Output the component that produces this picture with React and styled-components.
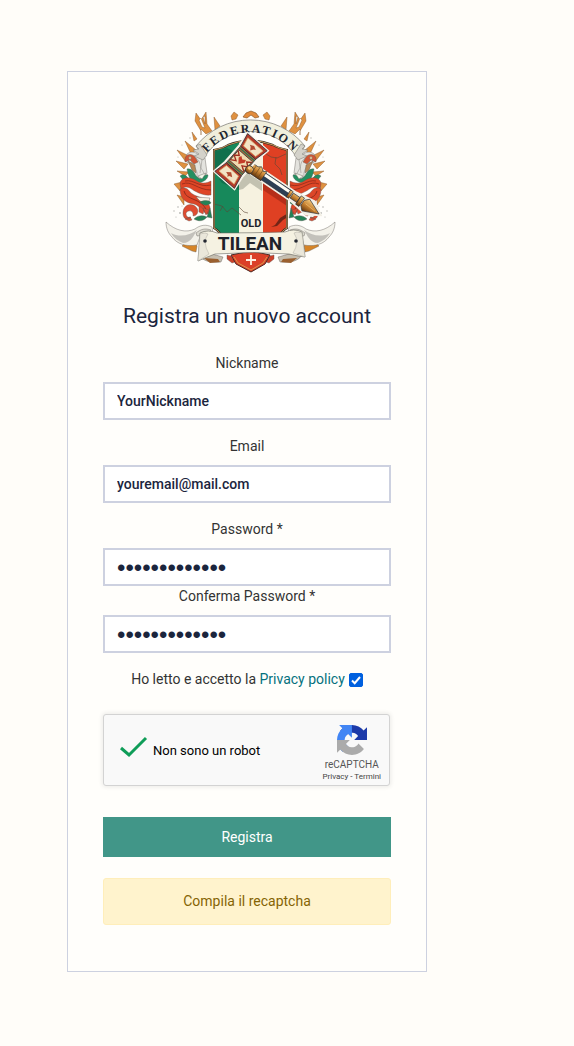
import React, { useState } from "react";
import styled, { createGlobalStyle } from "styled-components";

const GlobalStyle = createGlobalStyle`
  *, *::before, *::after { box-sizing: border-box; }
  body {
    margin: 0;
    background: #fffdf9;
    color: #333;
    font: 14px/21px Roboto, "Liberation Sans", sans-serif;
  }
`;

const Page = styled.main`
  padding: 71px 67px 74px;
`;

const Card = styled.section`
  width: 100%;
  max-width: 360px;
  padding: 26px 35px 46px;
  background: #fffefb;
  border: 1px solid #cdd1e0;
  text-align: center;
`;

const Logo = styled.svg`
  display: block;
  width: 180px;
  height: 180px;
  margin: 0 auto;
`;

const Title = styled.h1`
  margin: 25px 0 23px;
  color: #1b253d;
  font-size: 21px;
  font-weight: 400;
  line-height: 27px;
`;

const Form = styled.form`
  display: flex;
  flex-direction: column;
`;

const Field = styled.div`
  display: flex;
  flex-direction: column;
  gap: 8px;
  margin-bottom: ${(p) => (p.$tight ? "0" : "16px")};
`;

const Input = styled.input`
  width: 100%;
  height: 38px;
  padding: 0 12px;
  border: 2px solid #cdd1e0;
  border-radius: 0;
  outline: none;
  background: #fff;
  color: #1b253d;
  font: 500 14px/20px Roboto, "Liberation Sans", sans-serif;
  &[type="password"] {
    padding-top: 2px;
    font: 400 24px/32px "Liberation Sans", sans-serif;
  }
`;

const Consent = styled.div`
  display: flex;
  align-items: center;
  justify-content: center;
  gap: 4px;
  margin-bottom: 24px;
`;

const PolicyLink = styled.a`
  color: #05717e;
  text-decoration: none;
`;

const Checkbox = styled.input`
  appearance: none;
  width: 14px;
  height: 14px;
  margin: 0;
  border: 1px solid #767676;
  border-radius: 2px;
  background: #fff;
  &:checked {
    border-color: #0060df;
    background: #0060df;
  }
`;

const CheckWrap = styled.span`
  display: grid;
  > * { grid-area: 1 / 1; }
  svg { pointer-events: none; }
`;

const Captcha = styled.div`
  display: flex;
  align-items: center;
  height: 72px;
  margin: 0 1px 31px 0;
  padding: 0 8px 0 16px;
  background: #f9f9f9;
  border: 1px solid #d3d3d3;
  border-radius: 3px;
  box-shadow: 0 0 4px 1px rgba(0, 0, 0, 0.08);
  color: #000;
`;

const CaptchaText = styled.span`
  flex: 1;
  margin-left: 5px;
  font-size: 13px;
  text-align: left;
`;

const CaptchaBrand = styled.div`
  display: flex;
  flex-direction: column;
  align-items: center;
  padding-top: 8px;
  color: #555;
  font-size: 10px;
  line-height: 12px;
  svg { margin-bottom: 4px; }
`;

const CaptchaLinks = styled.div`
  font-size: 8px;
  line-height: 12px;
  color: #222;
  a { color: #444; text-decoration: none; }
`;

const Submit = styled.button`
  height: 40px;
  margin-bottom: 21px;
  padding: 0;
  border: 0;
  background: #419688;
  color: #fff;
  font: 14px/21px Roboto, "Liberation Sans", sans-serif;
`;

const Alert = styled.div`
  padding: 12px;
  border: 1px solid #ffeeba;
  border-radius: 3px;
  background: #fff3cd;
  color: #856404;
`;

const INK = "#242832";

function SideOrnament() {
  return (
    <g stroke="#5b5552" strokeWidth="0.4" strokeLinejoin="round">
      <g fill="#df9140" stroke="#7b4a1c">
        <path d="M185 141l11 9-5 4zM177 150l14 7-5 5zM176 161l12 3-4 5zM177 171l12 1-4 4zM174 184l8-2-2 9zM177 195l7 2v8zM214 117l6 9-5 4zM192 132l5 7-3 2z" />
        <path d="M201 131l-6-10 1-8 5 7 5-8 1 12 5 7-6 3-5-5v6z" />
        <path d="M199 120l2-2 4 10-3-1zM203 117l2-1v8z" fill="#fffdf6" />
        <path d="M231 116l3-4 4 3-2 4-4 1z" />
      </g>
      <path d="M187 154c5-4 10-1 13 2l5 2 2 15-5 7-7-4-5-12-5-3z" fill="#e4e3de" />
      <path d="M185 158c2-5 8-4 10-1l3 5-4 2-4-4-5 2z" fill="#cf5535" />
      <circle cx="190" cy="158" r="1.4" fill="#f1d4a5" />
      <path d="M191 162c3 5 7 8 6 15M196 158c5 4 5 9 4 15M202 159l-1 9 4 7" fill="none" stroke="#74716d" />
      <path d="M188 161l4 9 4 3-1-8z" fill="#b88755" />
      <path d="M187 169c4-1 7 3 9 7l4 3c4-4 7-5 8-4 0 4-4 7-10 8-7 0-10-7-11-14zM180 176c4-3 8 0 10 6l-6-1z" fill="#239061" />
      <path d="M198 176l8-3-4 6z" fill="#f3f7e9" />
      <path d="M180 184c0-6 8-9 17-3 6 4 12 1 14 0v14c-8 1-15-3-21-7-5-2-8-1-8 5z" fill="#df4626" />
      <path d="M182 184c10-4 15 6 29 6M185 181c9-2 14 7 26 4" fill="none" stroke="#842718" strokeWidth="0.7" />
      <path d="M180 189c5-3 8 0 11 4 6 5 15 3 19 14v8c-7-1-9-9-16-11-8-1-14-5-14-15z" fill="#dc4628" />
      <path d="M184 191c2 10 17 6 23 20" fill="none" stroke="#7d2719" strokeWidth="0.8" />
      <path d="M196 197l14 1-2 6-8-3z" fill="#f7f2e4" />
      <path d="M200 202c4-2 10-2 11 1-4 3-7 3-11-1zM194 219c4-4 9-4 13-2-3 4-8 5-13 2zM207 217l3-9 2 10z" fill="#238357" />
      <path d="M183 213c0-8 8-11 13-6 4 4 1 9-3 9 1-5-4-7-7-3 0 4 2 5 5 4-4 4-8 2-8-4zM199 207c4-1 6 4 4 7l-4-2zM185 219l5-2 2 3-3 1zM203 208l6 2-3 5z" fill="#df4c31" />
      <g fill="#b4b4b0" stroke="none">
        <circle cx="178" cy="207" r="0.8" /><circle cx="174" cy="211" r="0.7" /><circle cx="180" cy="213" r="0.9" />
        <circle cx="176" cy="217" r="0.6" /><circle cx="182" cy="206" r="0.5" /><circle cx="190" cy="138" r="0.7" />
        <circle cx="182" cy="145" r="0.6" /><circle cx="178" cy="157" r="0.6" />
      </g>
      <path d="M182 246l3-3h10l2 3-1 6-4-1-4-2z" fill="#d68427" />
      <path d="M166 222c10 9 20 11 29 7 5-4 11-5 17-2l1 7-13 3-3 8c-11 2-20-1-25-8-4-4-6-9-6-15z" fill="#f3f1e9" />
      <path d="M171 233c9 5 19 2 26-3l-4 7c-3 4-6 6-10 6-5-2-9-5-12-10z" fill="#c3c1bb" stroke="none" />
      <path d="M196 233c5-4 9-5 15-3l-4 5-10 1z" fill="#dad8ce" />
      <path d="M199 255l13-1 11 3-2 5c-8 1-18 0-22-7z" fill="#c6bfb0" />
      <path d="M204 258l14 1 2 3-10 1z" fill="#9b602f" stroke="none" />
      <path d="M227 255l4 1 4 6-3 1-5-4z" fill="#cc402a" />
    </g>
  );
}

function FederationLogo() {
  return (
    <Logo viewBox="157 98 180 180" role="img" aria-label="Federation Old Tilean">
      <defs>
        <clipPath id="shield">
          <path d="M214 150q10-2 14-5 22-9 45 0 5 3 14 5v78q-6 3-8 11h-57q-2-8-8-11z" />
        </clipPath>
        <path id="motto" d="M194 182A57 57 0 0 1 307 182" />
        <linearGradient id="gold" x1="0" y1="0" x2="0" y2="1">
          <stop offset="0" stopColor="#f5cc7f" />
          <stop offset="0.5" stopColor="#c78130" />
          <stop offset="1" stopColor="#60340d" />
        </linearGradient>
      </defs>

      <SideOrnament />
      <g transform="translate(501 0) scale(-1 1)">
        <SideOrnament />
      </g>
      <path d="M243 117l3-4 5-2 5 2 3 4-4 1-4-3-4 3z" fill="#e28c3c" stroke="#7b4a1c" strokeWidth="0.6" />

      <g clipPath="url(#shield)">
        <path d="M213 138h26v105h-26z" fill="#17895b" />
        <path d="M239 138h24v105h-24z" fill="#f6f2e0" />
        <path d="M263 138h27v105h-27z" fill="#df4023" />
        <path d="M213 152l14-4 12 6v6l-26 14zM222 183l17 7v-15l-20 4z" fill="#0c5b42" opacity="0.55" />
        <path d="M239 176l9-7 14 12v10l-12-8-7 6-4 1z" fill="#777a6c" opacity="0.4" />
        <path d="M263 182l24 17v7l-24-16z" fill="#9b2312" opacity="0.6" />
        <path d="M214 204l8 2 5 6 5-4 9 7M223 206l-3 5M239 207l5 5 4 1M263 152l8 5 6 1 11-5M276 157l-1 7 5 5 2 6" fill="none" stroke="#5d4635" strokeWidth="0.6" />
        <path d="M288 213l-8 5-5 7-4 2 6-1 6-6 5-3z" fill="#742416" />
      </g>
      <path d="M214 150q10-2 14-5 22-9 45 0 5 3 14 5v78q-6 3-8 11h-57q-2-8-8-11z" fill="none" stroke="#2f2a25" strokeWidth="2" />
      <path d="M214 150q10-2 14-5 22-9 45 0 5 3 14 5v78q-6 3-8 11h-57q-2-8-8-11z" fill="none" stroke="#dca964" strokeWidth="0.9" />

      <path d="M196 146A70 70 0 0 1 305 146L297 158A54 54 0 0 0 204 158z" fill="#f1efdc" stroke="#777670" strokeWidth="0.7" />
      <path d="M196 146l4-2 7 11-4 5-9-4 5-2-6-4 6-1zM305 146l-4-2-7 11 4 5 9-4-5-2 6-4-6-1z" fill="#d4d2ca" stroke="#77746f" strokeWidth="0.5" />
      <text fill="#20252f" fontFamily="'Liberation Serif', serif" fontSize="12" fontWeight="700" letterSpacing="2">
        <textPath href="#motto" startOffset="50%" textAnchor="middle">FEDERATION</textPath>
      </text>

      <g transform="translate(242 162) rotate(34)" stroke={INK} strokeWidth="0.6">
        <path d="M10-5h52l20-3 13 8-13 8-20-3H10z" fill="#f3f0e6" stroke="#f3f0e6" strokeWidth="2" />
        <path d="M24-4h33v8H24z" fill="#2d3f54" />
        <path d="M25-2h31" stroke="#fffdf4" strokeWidth="3" />
        <path d="M10-5h6l3-2 4 3 3-2v11H10z" fill="url(#gold)" />
        <path d="M14-5V5M18-6V5M22-5V5" stroke="#67421d" />
        <path d="M56-4h3V4h-3zM60-3h8v6h-8zM68-5h4V5h-4z" fill="url(#gold)" />
        <path d="M73-3l4-4 16 7-16 7-4-4z" fill="url(#gold)" />
        <path d="M76-1l12 1" stroke="#f6c477" />
      </g>

      <g transform="translate(241 161) rotate(41)" stroke={INK} strokeWidth="0.7">
        <path d="M-13-25h26L11-11V11l2 14h-26l2-14V-11z" fill="#f7f3e8" stroke="#f7f3e8" strokeWidth="3" />
        <path d="M-10-11h20V11h-20z" fill="#a66a38" />
        <path d="M-9-7H9V7H-9z" fill="#efd9ae" />
        <path d="M-10-9h20M-10 9h20" stroke="#297458" strokeWidth="1.2" />
        <path d="M-9-6l4 3-4 3 5 3-5 3M9-6L5-3l4 3-5 3 5 3" fill="none" stroke="#a32f20" strokeWidth="1.4" />
        <path d="M-3-4l3 2 3-2 1 3-4 5-4-5z" fill="#c43d28" stroke="none" />
        <path d="M-10-11l-3-14h26l-3 14z" fill="#b43a29" />
        <path d="M-8-13l-2-9h20l-2 9z" fill="#f2e3c5" stroke="#dba86a" />
        <path d="M-4-18l4-2 4 2-2 1-2 3-2-3z" fill="#b24b31" stroke="none" />
        <path d="M-10 11l-3 14h26l-3-14z" fill="#b43a29" />
        <path d="M-8 13l-2 9h20l-2-9z" fill="#f2e3c5" stroke="#dba86a" />
        <path d="M-4 18l4-3 4 3-3 1-1 2-1-2z" fill="#b24b31" stroke="none" />
        <circle cx="12" cy="1" r="4" fill="url(#gold)" />
        <circle cx="11" cy="0" r="1.4" fill="#f6ce82" stroke="none" />
      </g>

      <path d="M231 255l20-4 19 4-5 9-14 8-15-8z" fill="#db4027" stroke="#4b2720" strokeWidth="1" />
      <path d="M234 257l4 6 13 7 12-7 4-6" fill="none" stroke="#d79a4c" strokeWidth="1" />
      <path d="M246 260h10M251 255v10" stroke="#fff1e2" strokeWidth="1.8" />
      <path d="M200 233q8-4 17 0 34 0 68-1 9-4 17 0l3 25q-8-1-16-3-36-3-74 0-8 3-17 7z" fill="#f5f2e2" stroke="#65645e" strokeWidth="0.6" />
      <path d="M200 234q6-2 8 0-6 8 1 20l-11 7zM302 233q-6-2-8 0 6 9-1 20l12 4z" fill="#eae7da" stroke="#a09d94" strokeWidth="0.4" />
      <circle cx="205" cy="241" r="1.8" fill={INK} />
      <circle cx="296" cy="241" r="1.8" fill={INK} />
      <text x="251" y="227" fill="#1e222a" textAnchor="middle" fontFamily="Roboto, sans-serif" fontSize="11" fontWeight="700">OLD</text>
      <text x="250" y="250" fill="#1e222a" textAnchor="middle" fontFamily="Roboto, sans-serif" fontSize="19" fontWeight="700">TILEAN</text>
    </Logo>
  );
}

function RecaptchaMark() {
  return (
    <svg width="30" height="30" viewBox="0 0 64 64" aria-hidden="true">
      <path fill="#1c3aa9" d="M64 31.955l-.033-1.37V4.687l-7.16 7.16C50.948 4.674 42.033.093 32.05.093c-10.4 0-19.622 4.96-25.458 12.64l11.736 11.86a15.55 15.55 0 0 1 4.754-5.334c2.05-1.6 4.952-2.906 8.968-2.906.485 0 .86.057 1.135.163 4.976.393 9.288 3.14 11.828 7.124l-8.307 8.307L64 31.953" />
      <path fill="#4285f4" d="M31.862.094l-1.37.033H4.594l7.16 7.16C4.58 13.147 0 22.06 0 32.046c0 10.4 4.96 19.622 12.64 25.458L24.5 45.768a15.55 15.55 0 0 1-5.334-4.754c-1.6-2.05-2.906-4.952-2.906-8.968 0-.485.057-.86.163-1.135.393-4.976 3.14-9.288 7.124-11.828l8.307 8.307L31.86.095" />
      <path fill="#ababab" d="M.001 32.045l.033 1.37v25.898l7.16-7.16c5.86 7.173 14.774 11.754 24.76 11.754 10.4 0 19.622-4.96 25.458-12.64l-11.736-11.86a15.55 15.55 0 0 1-4.754 5.334c-2.05 1.6-4.952 2.906-8.968 2.906-.485 0-.86-.057-1.135-.163-4.976-.393-9.288-3.14-11.828-7.124l8.307-8.307c-10.522.04-22.4.066-27.295-.005" />
    </svg>
  );
}

function LabeledInput({ id, label, tight, ...rest }) {
  return (
    <Field $tight={tight}>
      <label htmlFor={id}>{label}</label>
      <Input id={id} {...rest} />
    </Field>
  );
}

export default function App() {
  const [accepted, setAccepted] = useState(true);
  return (
    <Page>
      <GlobalStyle />
      <Card>
        <FederationLogo />
        <Title>Registra un nuovo account</Title>
        <Form onSubmit={(e) => e.preventDefault()}>
          <LabeledInput id="nickname" label="Nickname" type="text" defaultValue="YourNickname" />
          <LabeledInput id="email" label="Email" type="email" defaultValue="youremail@mail.com" />
          <LabeledInput id="password" label="Password *" type="password" defaultValue="Password12345" tight />
          <LabeledInput id="confirm" label="Conferma Password *" type="password" defaultValue="Password12345" />
          <Consent>
            <label htmlFor="privacy">
              Ho letto e accetto la <PolicyLink href="#privacy-policy">Privacy policy</PolicyLink>
            </label>
            <CheckWrap>
              <Checkbox id="privacy" type="checkbox" checked={accepted} onChange={(e) => setAccepted(e.target.checked)} />
              {accepted && (
                <svg width="14" height="14" viewBox="0 0 14 14" aria-hidden="true">
                  <path d="M3 7.5l2.7 2.7L11 4" fill="none" stroke="#fff" strokeWidth="2" />
                </svg>
              )}
            </CheckWrap>
          </Consent>
          <Captcha>
            <svg width="28" height="28" viewBox="0 0 28 28" aria-hidden="true">
              <path d="M1 12l8 7L26 2" fill="none" stroke="#0f9d58" strokeWidth="3" />
            </svg>
            <CaptchaText>Non sono un robot</CaptchaText>
            <CaptchaBrand>
              <RecaptchaMark />
              <span>reCAPTCHA</span>
              <CaptchaLinks>
                <a href="#privacy">Privacy</a> - <a href="#termini">Termini</a>
              </CaptchaLinks>
            </CaptchaBrand>
          </Captcha>
          <Submit type="submit">Registra</Submit>
          <Alert role="alert">Compila il recaptcha</Alert>
        </Form>
      </Card>
    </Page>
  );
}
